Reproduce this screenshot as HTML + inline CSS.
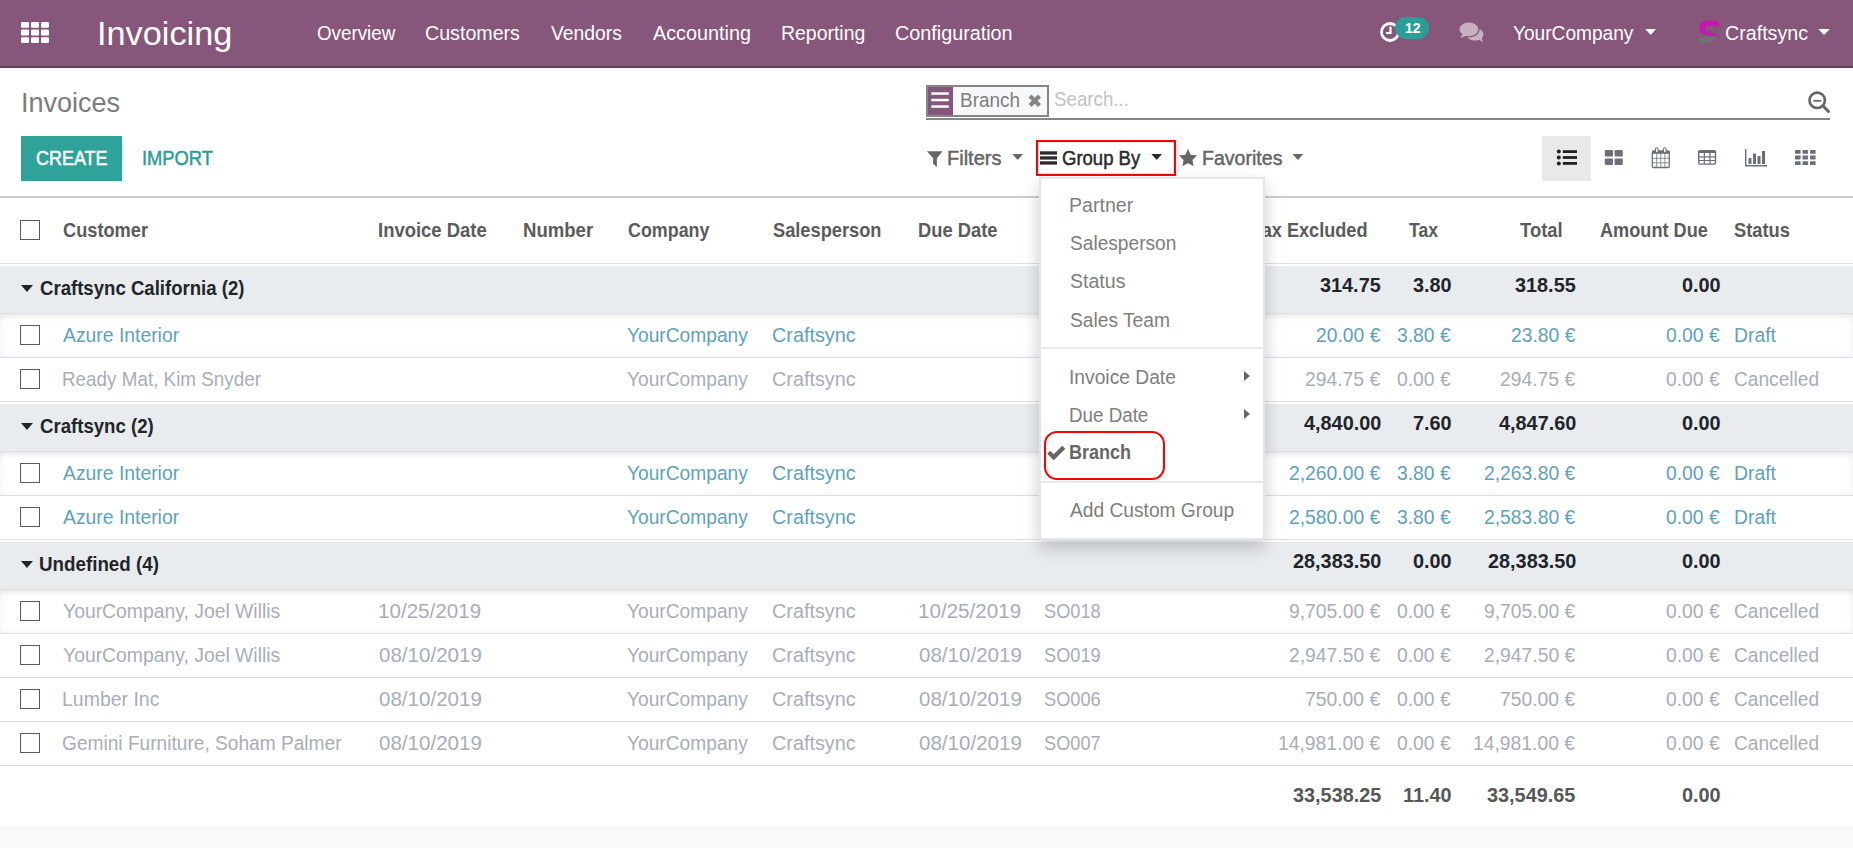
<!DOCTYPE html>
<html>
<head>
<meta charset="utf-8">
<title>Invoices - Odoo</title>
<style>
*{box-sizing:border-box;margin:0;padding:0}
html,body{width:1853px;height:848px;overflow:hidden;background:#f9f9f9;font-family:"Liberation Sans",sans-serif}
body{position:relative;color:#4c4c4c}
.abs{position:absolute}
.t{position:absolute;white-space:nowrap;transform-origin:0 0;font-size:20.5px;line-height:27px}
.b{font-weight:bold}
.w{color:#fff}
.med{-webkit-text-stroke:0.5px currentColor}
.teal{color:#2b9c95}
.crumb{color:#7c7c7c}
.g80{color:#7e7e7e}
.g66{color:#666}
.g2b{color:#2b2b2b}
.ph{color:#c2c2c2}
.hd{color:#5b5b5b}
.gr{color:#212529}
.ft{color:#575757}
.blue{color:#5ea2bd}
.mut{color:#a8aeb7}
/* NAVBAR */
#nav{position:absolute;left:0;top:0;width:1853px;height:68px;background:#86577b;border-bottom:2px solid #613c58}
/* CONTROL PANEL */
#cp{position:absolute;left:0;top:68px;width:1853px;height:130px;background:#fff;border-bottom:2px solid #cdcdcd}
#create{position:absolute;left:21px;top:68px;width:101px;height:45px;background:#2fa29a}
#searchline{position:absolute;left:926px;top:50px;width:904px;height:2px;background:#868686}
#facet{position:absolute;left:926px;top:17px;width:123px;height:32px;border:2px solid #868686;background:#f7f8fa}
#facet .ic{position:absolute;left:0;top:0;width:25px;height:28px;background:#86577b}
#redbox{position:absolute;left:1036px;top:72px;width:140px;height:36px;border:2px solid #ff0000}
#vs-active{position:absolute;left:1542px;top:68px;width:49px;height:45px;background:#e9e9e9}
/* TABLE */
#tbl{position:absolute;left:0;top:198px;width:1853px;height:627px;background:#fff}
.hline{position:absolute;left:0;width:1853px;height:1px;background:#dcdee4}
.gbg{position:absolute;left:0;width:1853px;height:48px;background:#e9ecef;border-bottom:1px solid #dde0e4}
.sh{position:absolute;left:0;width:1853px;height:43px;box-shadow:inset 0 0 10px rgba(0,0,0,.05),inset 0 5px 7px -4px rgba(0,0,0,.10)}
.cb{position:absolute;left:20px;width:20px;height:20px;border:1.5px solid #5a5a5a;background:#fff}
/* DROPDOWN */
#dd{position:absolute;left:1039px;top:177px;width:226px;height:363px;background:#fff;border:2px solid #e4e6eb;box-shadow:0 8px 16px rgba(0,0,0,.2)}
#dd .div{position:absolute;left:0;width:100%;height:2px;background:#e9ebef}
#redbox2{position:absolute;left:1044px;top:431px;width:121px;height:49px;border:2px solid #ff0000;border-radius:13px}
</style>
</head>
<body>
<div id="nav">
  <svg class="abs" style="left:21px;top:22px" width="28" height="21" viewBox="0 0 28 21"><g fill="#fff"><rect x="0" y="0" width="8" height="5.8" rx="1.2"/><rect x="10" y="0" width="8" height="5.8" rx="1.2"/><rect x="20" y="0" width="8" height="5.8" rx="1.2"/><rect x="0" y="7.6" width="8" height="5.8" rx="1.2"/><rect x="10" y="7.6" width="8" height="5.8" rx="1.2"/><rect x="20" y="7.6" width="8" height="5.8" rx="1.2"/><rect x="0" y="15.2" width="8" height="5.8" rx="1.2"/><rect x="10" y="15.2" width="8" height="5.8" rx="1.2"/><rect x="20" y="15.2" width="8" height="5.8" rx="1.2"/></g></svg>
  <!-- clock -->
  <svg class="abs" style="left:1379px;top:21px" width="22" height="22" viewBox="0 0 22 22"><circle cx="11" cy="11" r="8.500" fill="none" stroke="#fff" stroke-width="2.800"/><path d="M11.5 5.5v6.5h-4.5" fill="none" stroke="#fff" stroke-width="2.2"/></svg>
  <div class="abs" style="left:1395px;top:17px;width:34px;height:22px;border-radius:11px;background:#2a9f97"></div>
  <!-- chat -->
  <svg class="abs" style="left:1459px;top:22px" width="26" height="22" viewBox="0 0 26 22"><g fill="#c6b0c2"><ellipse cx="15.800" cy="12.300" rx="8.600" ry="6.300"/><path d="M19.500 17l4.300 3.400-1-5z"/><ellipse cx="9.900" cy="7.300" rx="9.400" ry="6.900" stroke="#86577b" stroke-width="2.600"/><ellipse cx="9.900" cy="7.300" rx="9.400" ry="6.900"/><path d="M3.800 11.500L1.300 16l7-2.600z"/></g></svg>
  <svg class="abs" style="left:1645px;top:28px" width="12" height="8" viewBox="0 0 12 8"><path d="M.4 1h10.600L5.700 6.900z" fill="#fff"/></svg>
  <!-- logo -->
  <svg class="abs" style="left:1690px;top:14px" width="40" height="36" viewBox="0 0 40 36"><path d="M7.400 25.600C10 23.600 20 22.100 27.200 22.300 26 25.200 20 29.200 13 29.700 10 29.600 7.500 28.200 7.400 25.600z" fill="#6f7072"/><path d="M17 15.300l9.200 4.400-1.200.7-6.500-2.600z" fill="#6a586a"/><path d="M26 6.800C23 6.400 18 6.400 14.500 7.300 11 8.300 9.200 11 9.200 14c0 2 .8 3.600 2.300 4.700 2 1.500 5 2.500 8.500 3.100 3.500.5 7 .3 9.300-.8-1.800-.1-3.300-.3-5-.7-2.500-.6-5-1.400-6.800-2.600-1.500-1-2.300-2.200-2.300-3.500 0-1.200.9-2 2.300-2.300 2.200-.5 5-.4 7.500.1 1.600.3 3.200.5 4.300.3.100-1.800-.6-3.800-1.800-5-.4-.3-1-.4-1.500-.5z" fill="#c615b0"/></svg>
  <svg class="abs" style="left:1818px;top:28px" width="13" height="8" viewBox="0 0 13 8"><path d="M.3 1h11.500L6 6.900z" fill="#fff"/></svg>
<span class="t w" style="left:96.98px;top:11.00px;transform:scaleX(1.0079);font-size:34px;line-height:44px">Invoicing</span>
<span class="t w" style="left:317.00px;top:19.00px;transform:scaleX(0.9167)">Overview</span>
<span class="t w" style="left:425.29px;top:19.00px;transform:scaleX(0.9580)">Customers</span>
<span class="t w" style="left:551.25px;top:19.00px;transform:scaleX(0.9437)">Vendors</span>
<span class="t w" style="left:653.00px;top:19.00px;transform:scaleX(0.9651)">Accounting</span>
<span class="t w" style="left:781.05px;top:19.00px;transform:scaleX(0.9487)">Reporting</span>
<span class="t w" style="left:894.79px;top:19.00px;transform:scaleX(0.9644)">Configuration</span>
<span class="t w" style="left:1513.20px;top:19.00px;transform:scaleX(0.9322)">YourCompany</span>
<span class="t w" style="left:1725.24px;top:19.00px;transform:scaleX(0.9587)">Craftsync</span>
<span class="t w b" style="left:1404.80px;top:17.50px;transform:scaleX(0.9301);font-size:15px;line-height:20px">12</span>
</div>
<div id="cp">
  <div id="create"></div>
  <div id="facet"><div class="ic"><svg class="abs" style="left:0;top:0" width="25" height="27" viewBox="0 0 25 27"><g fill="#fff"><rect x="3.300" y="5.300" width="17.500" height="2.500"/><rect x="3.300" y="11.800" width="17.500" height="2.500"/><rect x="3.300" y="18.300" width="17.500" height="2.500"/></g></svg></div></div>
  <!-- facet remove x -->
  <svg class="abs" style="left:1028px;top:26px" width="14" height="14" viewBox="0 0 14 14"><path d="M2 2l9.500 9.500M11.500 2L2 11.500" stroke="#868686" stroke-width="4.200" stroke-linecap="butt"/></svg>
  <div id="searchline"></div>
  <!-- search-minus icon -->
  <svg class="abs" style="left:1807px;top:22px" width="24" height="24" viewBox="0 0 24 24"><circle cx="10.200" cy="10.300" r="7.700" fill="none" stroke="#666" stroke-width="2.700"/><path d="M15.800 15.800l5.700 5.700" stroke="#666" stroke-width="3" stroke-linecap="round"/><path d="M6.300 10.800h8" stroke="#666" stroke-width="1.800"/></svg>
  <!-- filter funnel -->
  <svg class="abs" style="left:927px;top:82px" width="16" height="18" viewBox="0 0 16 18"><path d="M0 1.200h15.600L9.900 8.200v8.800L6.100 13.800V8.200z" fill="#666"/></svg>
  <svg class="abs" style="left:1012px;top:85px" width="12" height="8" viewBox="0 0 12 8"><path d="M0.3 1h10.800l-5.400 5.900z" fill="#666"/></svg>
  <!-- bars -->
  <svg class="abs" style="left:1040px;top:83px" width="17" height="14" viewBox="0 0 17 14"><g fill="#2b2b2b"><rect x="0" y=".3" width="17" height="3.300"/><rect x="0" y="5.300" width="17" height="3.300"/><rect x="0" y="10.300" width="17" height="3.300"/></g></svg>
  <svg class="abs" style="left:1151px;top:85px" width="12" height="8" viewBox="0 0 12 8"><path d="M0.3 1h10.800l-5.400 5.900z" fill="#2b2b2b"/></svg>
  <!-- star -->
  <svg class="abs" style="left:1179px;top:81px" width="18" height="17" viewBox="0 0 18 17"><path d="M9 0l2.700 5.800 6.300.8-4.600 4.400 1.200 6.200L9 14.200 3.400 17.200l1.200-6.200L0 6.600l6.300-.8z" fill="#666"/></svg>
  <svg class="abs" style="left:1292px;top:85px" width="12" height="8" viewBox="0 0 12 8"><path d="M0.5 1h10.800l-5.400 5.900z" fill="#666"/></svg>
  <div class="abs" style="left:1038px;top:74px;width:136px;height:32px;border:1px solid #dce5e9"></div>
  <div class="abs" style="left:1177px;top:75px;width:2px;height:31px;background:#ebebee"></div>
  <div id="redbox"></div>
  <div id="vs-active"></div>
  <!-- view switcher icons -->
  <svg class="abs" style="left:1556px;top:81px" width="22" height="17" viewBox="0 0 22 17"><g fill="#212121"><circle cx="2.800" cy="2.600" r="2"/><circle cx="2.800" cy="8.500" r="2"/><circle cx="2.800" cy="14.400" r="2"/><rect x="6.800" y="1.200" width="14.200" height="2.800"/><rect x="6.800" y="7.100" width="14.200" height="2.800"/><rect x="6.800" y="13" width="14.200" height="2.800"/></g></svg>
  <svg class="abs" style="left:1604px;top:82px" width="20" height="15" viewBox="0 0 20 15"><g fill="#6a6f78"><rect x=".8" y="0" width="8.200" height="6.400" rx="1"/><rect x="10.600" y="0" width="8.200" height="6.400" rx="1"/><rect x=".8" y="8.600" width="8.200" height="6.400" rx="1"/><rect x="10.600" y="8.600" width="8.200" height="6.400" rx="1"/></g></svg>
  <svg class="abs" style="left:1651px;top:79px" width="20" height="22" viewBox="0 0 20 22"><rect x="1.300" y="4" width="17" height="16.500" rx="1.300" fill="#fff" stroke="#6a6f78" stroke-width="1.300"/><rect x="1.300" y="4" width="17" height="2.800" fill="#6a6f78"/><rect x="4.500" y=".8" width="2.600" height="5" rx="1.300" fill="#fff" stroke="#6a6f78" stroke-width="1.100"/><rect x="12.500" y=".8" width="2.600" height="5" rx="1.300" fill="#fff" stroke="#6a6f78" stroke-width="1.100"/><path d="M1.300 11.300h17M1.300 15.800h17M5.700 6.800v13.700M9.800 6.800v13.700M13.900 6.800v13.700" stroke="#7d828a" stroke-width=".9"/></svg>
  <svg class="abs" style="left:1698px;top:82px" width="19" height="15" viewBox="0 0 19 15"><rect x=".7" y=".7" width="16.800" height="13.400" rx="1.300" fill="#fff" stroke="#6a6f78" stroke-width="1.400"/><rect x=".7" y=".7" width="16.800" height="2.300" fill="#6a6f78"/><path d="M.7 6.900h16.800M.7 10.500h16.800M6.300 3v11M11.900 3v11" stroke="#6a6f78" stroke-width="1.200"/></svg>
  <svg class="abs" style="left:1744px;top:81px" width="23" height="18" viewBox="0 0 23 18"><path d="M1.700 0v16.800h21.300" fill="none" stroke="#6a6f78" stroke-width="1.400"/><g fill="#6a6f78"><rect x="4.500" y="9" width="3" height="6"/><rect x="9" y="4.500" width="3" height="10.500"/><rect x="13.500" y="7" width="3" height="8"/><rect x="18" y="2" width="3" height="13"/></g></svg>
  <svg class="abs" style="left:1795px;top:82px" width="21" height="15" viewBox="0 0 21 15"><g fill="#6a6f78"><rect x="0" y="0" width="5.600" height="3.800" rx=".6"/><rect x="7.500" y="0" width="5.600" height="3.800" rx=".6"/><rect x="15" y="0" width="5.600" height="3.800" rx=".6"/><rect x="0" y="5.600" width="5.600" height="3.800" rx=".6"/><rect x="7.500" y="5.600" width="5.600" height="3.800" rx=".6"/><rect x="15" y="5.600" width="5.600" height="3.800" rx=".6"/><rect x="0" y="11.200" width="5.600" height="3.800" rx=".6"/><rect x="7.500" y="11.200" width="5.600" height="3.800" rx=".6"/><rect x="15" y="11.200" width="5.600" height="3.800" rx=".6"/></g></svg>
<span class="t crumb" style="left:20.60px;top:15.50px;transform:scaleX(0.9482);font-size:28.5px;line-height:37px">Invoices</span>
<span class="t w med" style="left:35.87px;top:75.50px;transform:scaleX(0.8755)">CREATE</span>
<span class="t teal med" style="left:141.61px;top:75.50px;transform:scaleX(0.8944)">IMPORT</span>
<span class="t g80" style="left:960.33px;top:17.75px;transform:scaleX(0.9244)">Branch</span>
<span class="t ph" style="left:1054.20px;top:17.25px;transform:scaleX(0.9136)">Search...</span>
<span class="t g66 med" style="left:947.02px;top:75.50px;transform:scaleX(0.9761)">Filters</span>
<span class="t g2b med" style="left:1061.90px;top:75.50px;transform:scaleX(0.9034)">Group By</span>
<span class="t g66 med" style="left:1201.55px;top:75.50px;transform:scaleX(0.9542)">Favorites</span>
</div>
<div id="tbl">
  <div class="hline" style="top:65px"></div>
  <div class="cb" style="top:22px"></div>
  <!-- group rows -->
  <div class="gbg" style="top:68px"></div>
  <div class="gbg" style="top:206px"></div>
  <div class="gbg" style="top:344px"></div>
  <div class="sh" style="top:116px"></div>
  <div class="sh" style="top:254px"></div>
  <div class="sh" style="top:392px"></div>
  <!-- group carets -->
  <div class="abs" style="left:21px;top:87px;border-left:6px solid transparent;border-right:6px solid transparent;border-top:7px solid #212529"></div>
  <div class="abs" style="left:21px;top:225px;border-left:6px solid transparent;border-right:6px solid transparent;border-top:7px solid #212529"></div>
  <div class="abs" style="left:21px;top:363px;border-left:6px solid transparent;border-right:6px solid transparent;border-top:7px solid #212529"></div>
  <!-- row borders -->
  <div class="hline" style="top:159px"></div><div class="hline" style="top:203px"></div>
  <div class="hline" style="top:297px"></div><div class="hline" style="top:341px"></div>
  <div class="hline" style="top:435px"></div><div class="hline" style="top:479px"></div><div class="hline" style="top:523px"></div><div class="hline" style="top:567px"></div>
  <!-- checkboxes -->
  <div class="cb" style="top:127px"></div><div class="cb" style="top:171px"></div>
  <div class="cb" style="top:265px"></div><div class="cb" style="top:309px"></div>
  <div class="cb" style="top:403px"></div><div class="cb" style="top:447px"></div><div class="cb" style="top:491px"></div><div class="cb" style="top:535px"></div>
<span class="t hd b" style="left:62.50px;top:18.00px;transform:scaleX(0.8881)">Customer</span>
<span class="t hd b" style="left:377.85px;top:18.00px;transform:scaleX(0.9006)">Invoice Date</span>
<span class="t hd b" style="left:522.84px;top:18.00px;transform:scaleX(0.9055)">Number</span>
<span class="t hd b" style="left:627.50px;top:18.00px;transform:scaleX(0.8723)">Company</span>
<span class="t hd b" style="left:772.50px;top:18.00px;transform:scaleX(0.8896)">Salesperson</span>
<span class="t hd b" style="left:917.86px;top:18.00px;transform:scaleX(0.8947)">Due Date</span>
<span class="t hd b" style="left:1408.75px;top:18.00px;transform:scaleX(0.8575)">Tax</span>
<span class="t hd b" style="left:1520.00px;top:18.00px;transform:scaleX(0.8984)">Total</span>
<span class="t hd b" style="left:1600.00px;top:18.00px;transform:scaleX(0.8852)">Amount Due</span>
<span class="t hd b" style="left:1733.75px;top:18.00px;transform:scaleX(0.8916)">Status</span>
<span class="t hd b" style="left:1043.75px;top:18.00px;transform:scaleX(0.8329)">Source Document</span>
<span class="t hd b" style="left:1252.00px;top:18.00px;transform:scaleX(0.8838)">Tax Excluded</span>
<span class="t gr b" style="left:40.00px;top:75.50px;transform:scaleX(0.9067)">Craftsync California (2)</span>
<span class="t gr b" style="left:1320.19px;top:72.90px;transform:scaleX(0.9681)">314.75</span>
<span class="t gr b" style="left:1413.16px;top:72.90px;transform:scaleX(0.9681)">3.80</span>
<span class="t gr b" style="left:1515.19px;top:72.90px;transform:scaleX(0.9681)">318.55</span>
<span class="t gr b" style="left:1682.26px;top:72.90px;transform:scaleX(0.9681)">0.00</span>
<span class="t gr b" style="left:40.00px;top:213.50px;transform:scaleX(0.9077)">Craftsync (2)</span>
<span class="t gr b" style="left:1303.64px;top:210.90px;transform:scaleX(0.9681)">4,840.00</span>
<span class="t gr b" style="left:1413.16px;top:210.90px;transform:scaleX(0.9681)">7.60</span>
<span class="t gr b" style="left:1498.64px;top:210.90px;transform:scaleX(0.9681)">4,847.60</span>
<span class="t gr b" style="left:1682.26px;top:210.90px;transform:scaleX(0.9681)">0.00</span>
<span class="t gr b" style="left:39.08px;top:351.50px;transform:scaleX(0.9157)">Undefined (4)</span>
<span class="t gr b" style="left:1292.60px;top:348.90px;transform:scaleX(0.9681)">28,383.50</span>
<span class="t gr b" style="left:1413.16px;top:348.90px;transform:scaleX(0.9681)">0.00</span>
<span class="t gr b" style="left:1487.60px;top:348.90px;transform:scaleX(0.9681)">28,383.50</span>
<span class="t gr b" style="left:1682.26px;top:348.90px;transform:scaleX(0.9681)">0.00</span>
<span class="t blue" style="left:62.50px;top:123.00px;transform:scaleX(0.9434)">Azure Interior</span>
<span class="t blue" style="left:627.25px;top:123.00px;transform:scaleX(0.9353)">YourCompany</span>
<span class="t blue" style="left:771.53px;top:123.00px;transform:scaleX(0.9669)">Craftsync</span>
<span class="t blue" style="left:1315.54px;top:123.00px;transform:scaleX(0.9415)">20.00 €</span>
<span class="t blue" style="left:1397.03px;top:123.00px;transform:scaleX(0.9415)">3.80 €</span>
<span class="t blue" style="left:1510.54px;top:123.00px;transform:scaleX(0.9415)">23.80 €</span>
<span class="t blue" style="left:1666.03px;top:123.00px;transform:scaleX(0.9415)">0.00 €</span>
<span class="t blue" style="left:1733.56px;top:123.00px;transform:scaleX(0.9433)">Draft</span>
<span class="t mut" style="left:61.58px;top:167.00px;transform:scaleX(0.9193)">Ready Mat, Kim Snyder</span>
<span class="t mut" style="left:627.25px;top:167.00px;transform:scaleX(0.9353)">YourCompany</span>
<span class="t mut" style="left:771.53px;top:167.00px;transform:scaleX(0.9669)">Craftsync</span>
<span class="t mut" style="left:1304.81px;top:167.00px;transform:scaleX(0.9415)">294.75 €</span>
<span class="t mut" style="left:1397.03px;top:167.00px;transform:scaleX(0.9415)">0.00 €</span>
<span class="t mut" style="left:1499.81px;top:167.00px;transform:scaleX(0.9415)">294.75 €</span>
<span class="t mut" style="left:1666.03px;top:167.00px;transform:scaleX(0.9415)">0.00 €</span>
<span class="t mut" style="left:1733.57px;top:167.00px;transform:scaleX(0.9330)">Cancelled</span>
<span class="t blue" style="left:62.50px;top:261.00px;transform:scaleX(0.9434)">Azure Interior</span>
<span class="t blue" style="left:627.25px;top:261.00px;transform:scaleX(0.9353)">YourCompany</span>
<span class="t blue" style="left:771.53px;top:261.00px;transform:scaleX(0.9669)">Craftsync</span>
<span class="t blue" style="left:1288.71px;top:261.00px;transform:scaleX(0.9415)">2,260.00 €</span>
<span class="t blue" style="left:1397.03px;top:261.00px;transform:scaleX(0.9415)">3.80 €</span>
<span class="t blue" style="left:1483.71px;top:261.00px;transform:scaleX(0.9415)">2,263.80 €</span>
<span class="t blue" style="left:1666.03px;top:261.00px;transform:scaleX(0.9415)">0.00 €</span>
<span class="t blue" style="left:1733.56px;top:261.00px;transform:scaleX(0.9433)">Draft</span>
<span class="t blue" style="left:62.50px;top:305.00px;transform:scaleX(0.9434)">Azure Interior</span>
<span class="t blue" style="left:627.25px;top:305.00px;transform:scaleX(0.9353)">YourCompany</span>
<span class="t blue" style="left:771.53px;top:305.00px;transform:scaleX(0.9669)">Craftsync</span>
<span class="t blue" style="left:1288.71px;top:305.00px;transform:scaleX(0.9415)">2,580.00 €</span>
<span class="t blue" style="left:1397.03px;top:305.00px;transform:scaleX(0.9415)">3.80 €</span>
<span class="t blue" style="left:1483.71px;top:305.00px;transform:scaleX(0.9415)">2,583.80 €</span>
<span class="t blue" style="left:1666.03px;top:305.00px;transform:scaleX(0.9415)">0.00 €</span>
<span class="t blue" style="left:1733.56px;top:305.00px;transform:scaleX(0.9433)">Draft</span>
<span class="t mut" style="left:62.50px;top:399.00px;transform:scaleX(0.9439)">YourCompany, Joel Willis</span>
<span class="t mut" style="left:378.49px;top:399.00px;transform:scaleX(1.0054)">10/25/2019</span>
<span class="t mut" style="left:918.49px;top:399.00px;transform:scaleX(1.0054)">10/25/2019</span>
<span class="t mut" style="left:1043.75px;top:399.00px;transform:scaleX(0.8869)">SO018</span>
<span class="t mut" style="left:627.25px;top:399.00px;transform:scaleX(0.9353)">YourCompany</span>
<span class="t mut" style="left:771.53px;top:399.00px;transform:scaleX(0.9669)">Craftsync</span>
<span class="t mut" style="left:1288.71px;top:399.00px;transform:scaleX(0.9415)">9,705.00 €</span>
<span class="t mut" style="left:1397.03px;top:399.00px;transform:scaleX(0.9415)">0.00 €</span>
<span class="t mut" style="left:1483.71px;top:399.00px;transform:scaleX(0.9415)">9,705.00 €</span>
<span class="t mut" style="left:1666.03px;top:399.00px;transform:scaleX(0.9415)">0.00 €</span>
<span class="t mut" style="left:1733.57px;top:399.00px;transform:scaleX(0.9330)">Cancelled</span>
<span class="t mut" style="left:62.50px;top:443.00px;transform:scaleX(0.9439)">YourCompany, Joel Willis</span>
<span class="t mut" style="left:378.75px;top:443.00px;transform:scaleX(1.0029)">08/10/2019</span>
<span class="t mut" style="left:918.75px;top:443.00px;transform:scaleX(1.0029)">08/10/2019</span>
<span class="t mut" style="left:1043.75px;top:443.00px;transform:scaleX(0.8869)">SO019</span>
<span class="t mut" style="left:627.25px;top:443.00px;transform:scaleX(0.9353)">YourCompany</span>
<span class="t mut" style="left:771.53px;top:443.00px;transform:scaleX(0.9669)">Craftsync</span>
<span class="t mut" style="left:1288.71px;top:443.00px;transform:scaleX(0.9415)">2,947.50 €</span>
<span class="t mut" style="left:1397.03px;top:443.00px;transform:scaleX(0.9415)">0.00 €</span>
<span class="t mut" style="left:1483.71px;top:443.00px;transform:scaleX(0.9415)">2,947.50 €</span>
<span class="t mut" style="left:1666.03px;top:443.00px;transform:scaleX(0.9415)">0.00 €</span>
<span class="t mut" style="left:1733.57px;top:443.00px;transform:scaleX(0.9330)">Cancelled</span>
<span class="t mut" style="left:61.55px;top:487.00px;transform:scaleX(0.9501)">Lumber Inc</span>
<span class="t mut" style="left:378.75px;top:487.00px;transform:scaleX(1.0029)">08/10/2019</span>
<span class="t mut" style="left:918.75px;top:487.00px;transform:scaleX(1.0029)">08/10/2019</span>
<span class="t mut" style="left:1043.75px;top:487.00px;transform:scaleX(0.8869)">SO006</span>
<span class="t mut" style="left:627.25px;top:487.00px;transform:scaleX(0.9353)">YourCompany</span>
<span class="t mut" style="left:771.53px;top:487.00px;transform:scaleX(0.9669)">Craftsync</span>
<span class="t mut" style="left:1304.81px;top:487.00px;transform:scaleX(0.9415)">750.00 €</span>
<span class="t mut" style="left:1397.03px;top:487.00px;transform:scaleX(0.9415)">0.00 €</span>
<span class="t mut" style="left:1499.81px;top:487.00px;transform:scaleX(0.9415)">750.00 €</span>
<span class="t mut" style="left:1666.03px;top:487.00px;transform:scaleX(0.9415)">0.00 €</span>
<span class="t mut" style="left:1733.57px;top:487.00px;transform:scaleX(0.9330)">Cancelled</span>
<span class="t mut" style="left:61.57px;top:531.00px;transform:scaleX(0.9329)">Gemini Furniture, Soham Palmer</span>
<span class="t mut" style="left:378.75px;top:531.00px;transform:scaleX(1.0029)">08/10/2019</span>
<span class="t mut" style="left:918.75px;top:531.00px;transform:scaleX(1.0029)">08/10/2019</span>
<span class="t mut" style="left:1043.75px;top:531.00px;transform:scaleX(0.8869)">SO007</span>
<span class="t mut" style="left:627.25px;top:531.00px;transform:scaleX(0.9353)">YourCompany</span>
<span class="t mut" style="left:771.53px;top:531.00px;transform:scaleX(0.9669)">Craftsync</span>
<span class="t mut" style="left:1277.98px;top:531.00px;transform:scaleX(0.9415)">14,981.00 €</span>
<span class="t mut" style="left:1397.03px;top:531.00px;transform:scaleX(0.9415)">0.00 €</span>
<span class="t mut" style="left:1472.98px;top:531.00px;transform:scaleX(0.9415)">14,981.00 €</span>
<span class="t mut" style="left:1666.03px;top:531.00px;transform:scaleX(0.9415)">0.00 €</span>
<span class="t mut" style="left:1733.57px;top:531.00px;transform:scaleX(0.9330)">Cancelled</span>
<span class="t ft b" style="left:1292.50px;top:582.50px;transform:scaleX(0.9681)">33,538.25</span>
<span class="t ft b" style="left:1403.32px;top:582.50px;transform:scaleX(0.9681)">11.40</span>
<span class="t ft b" style="left:1487.40px;top:582.50px;transform:scaleX(0.9681)">33,549.65</span>
<span class="t ft b" style="left:1682.26px;top:582.50px;transform:scaleX(0.9681)">0.00</span>
</div>
<div id="dd">
  <div class="div" style="top:168px"></div>
  <div class="div" style="top:302px"></div>
  <!-- submenu arrows -->
  <div class="abs" style="left:203px;top:192px;border-top:5.500px solid transparent;border-bottom:5.500px solid transparent;border-left:6.500px solid #666"></div>
  <div class="abs" style="left:203px;top:230px;border-top:5.500px solid transparent;border-bottom:5.500px solid transparent;border-left:6.500px solid #666"></div>
  <!-- check -->
  <svg class="abs" style="left:6px;top:266px" width="19" height="15" viewBox="0 0 19 15"><path d="M1.700 7.300l5 5L16.800 2.200" fill="none" stroke="#666" stroke-width="4.300"/></svg>
<span class="t g80" style="left:27.74px;top:12.00px;transform:scaleX(0.9563)">Partner</span>
<span class="t g80" style="left:28.70px;top:50.40px;transform:scaleX(0.9334)">Salesperson</span>
<span class="t g80" style="left:28.70px;top:88.20px;transform:scaleX(0.9539)">Status</span>
<span class="t g80" style="left:28.70px;top:126.70px;transform:scaleX(0.9365)">Sales Team</span>
<span class="t g80" style="left:27.76px;top:183.70px;transform:scaleX(0.9382)">Invoice Date</span>
<span class="t g80" style="left:27.78px;top:221.50px;transform:scaleX(0.9155)">Due Date</span>
<span class="t g80" style="left:28.70px;top:317.00px;transform:scaleX(0.9356)">Add Custom Group</span>
<span class="t g66 b" style="left:27.82px;top:259.20px;transform:scaleX(0.8798)">Branch</span>
</div>
<div id="redbox2"></div>
</body>
</html>
